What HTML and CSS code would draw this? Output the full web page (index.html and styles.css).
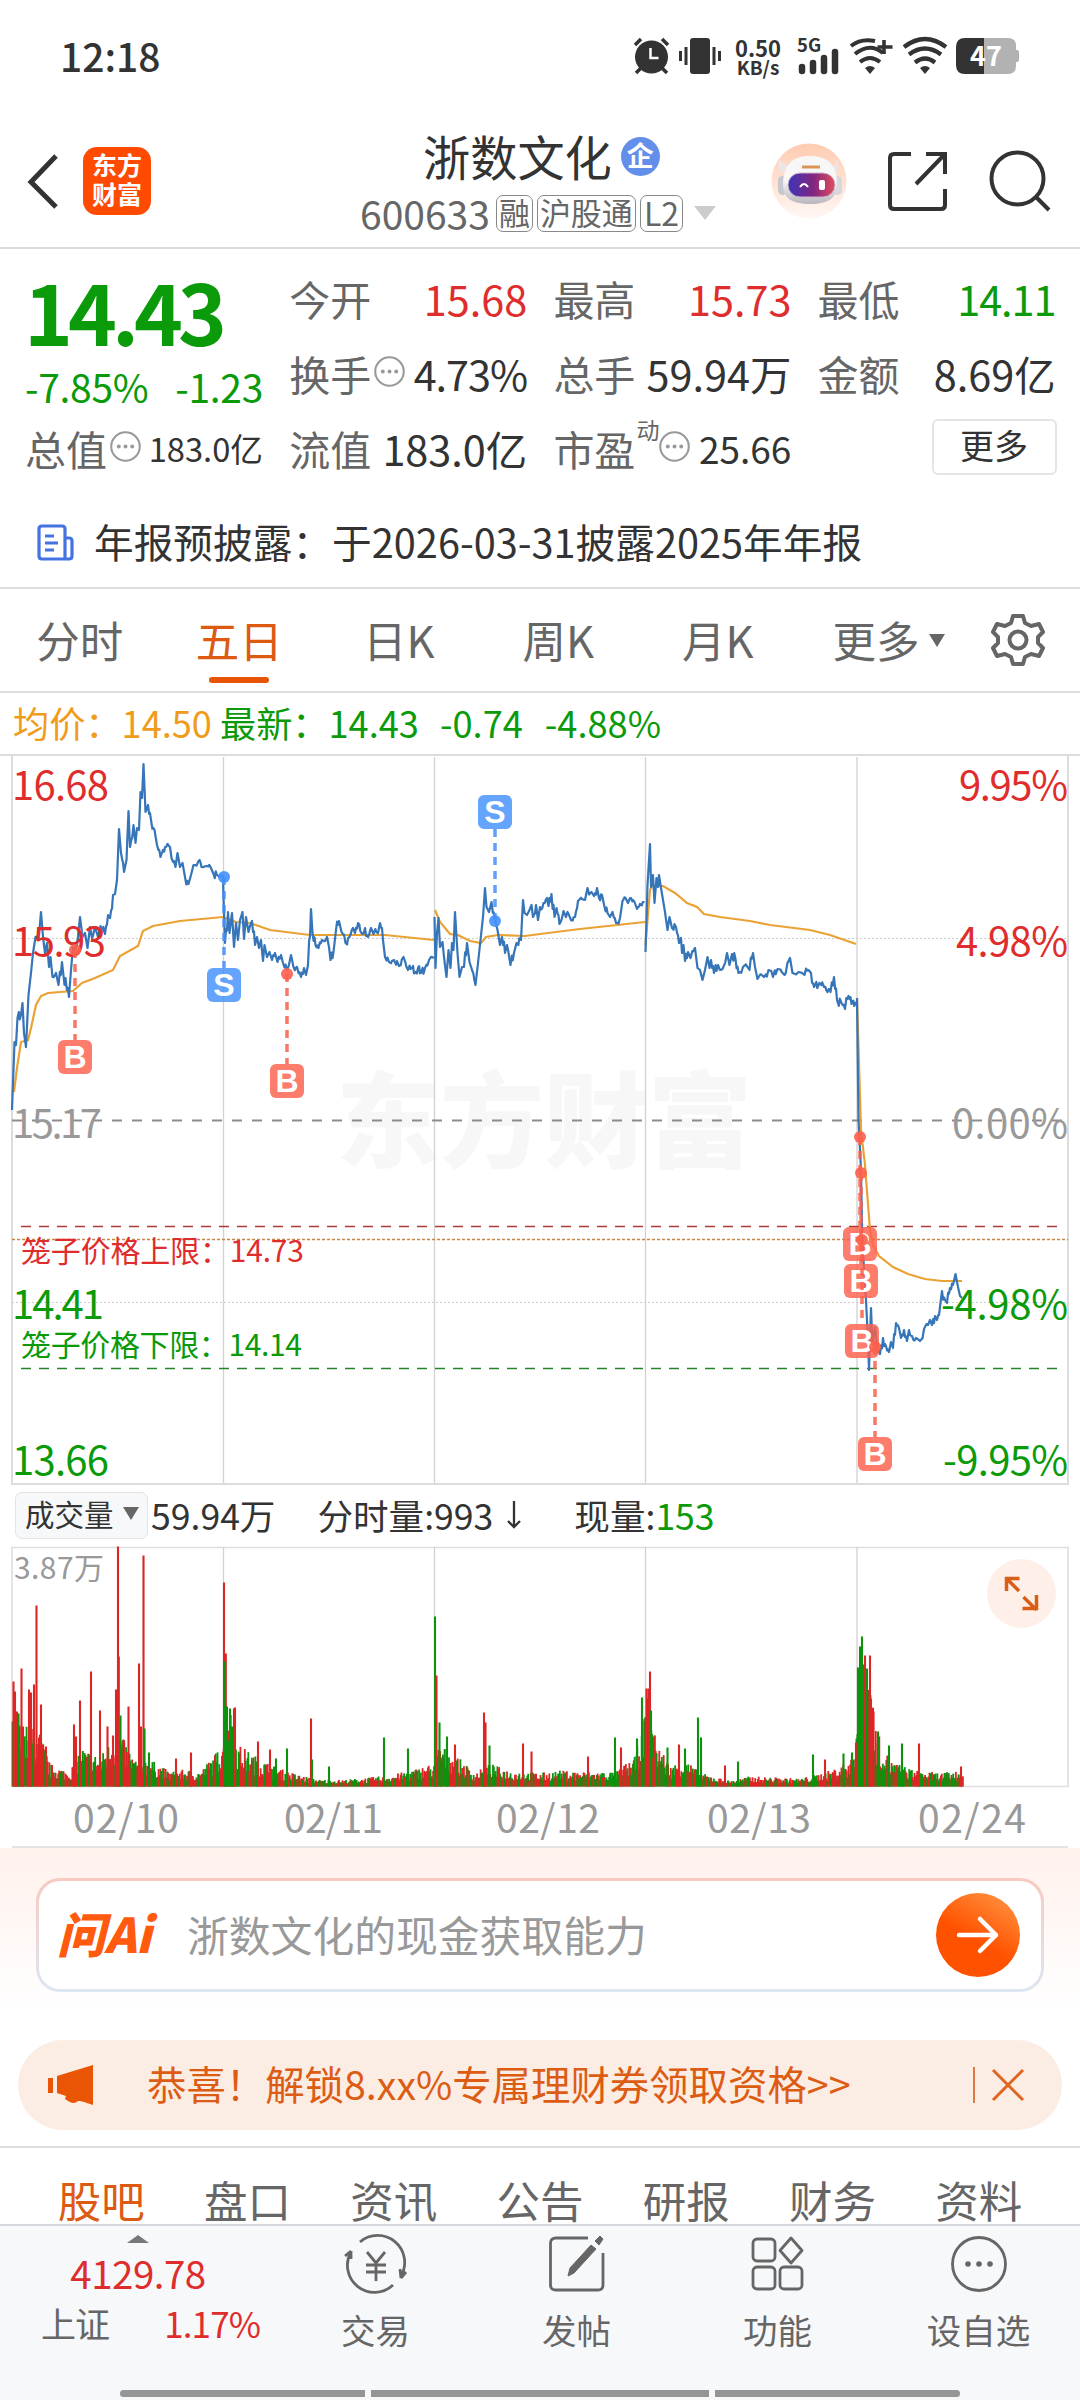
FILE: index.html
```html
<!DOCTYPE html>
<html lang="zh-CN">
<head>
  <meta charset="UTF-8" />
  <meta name="viewport" content="width=device-width, initial-scale=1.0"/>
  <title>浙数文化 600633</title>
  <link rel="stylesheet" href="styles.css">
</head>
<body>
  <!-- Status bar -->
  <div class="status">
    <span class="time">12:18</span>
    <div class="status-icons">
      <svg class="alarm" width="38" height="38" viewBox="0 0 38 38">
        <circle cx="18.500" cy="20" r="16.500" fill="#333"/>
        <path d="M2 8l6-6M35 8l-6-6M3 36l6-6M34 36l-6-6" stroke="#333" stroke-width="3.500"/>
        <path d="M17.500 11v10h8" fill="none" stroke="#fff" stroke-width="2.500"/>
      </svg>
      <svg class="vibrate" width="42" height="38" viewBox="0 0 42 38">
        <rect x="11" y="1" width="20" height="36" rx="3" fill="#333"/>
        <path d="M7 10v18M1.500 14v10M35 10v18M40.500 14v10" stroke="#333" stroke-width="3"/>
      </svg>
      <div class="speed"><b>0.50</b><b>KB/s</b></div>
      <svg class="signal" width="44" height="38" viewBox="0 0 44 38">
        <text x="0" y="15" font-size="18.500" font-weight="700" fill="#333">5G</text>
        <path d="M5 30v4M16 26v8M27 21v13M38 15v19" stroke="#333" stroke-width="6.500" stroke-linecap="round"/>
      </svg>
      <svg class="wifi-plus" width="44" height="38" viewBox="0 0 44 38">
        <path d="M2 9q10-8 24-5M6 17q15-12 28-1M11 25q10-8 20 0" fill="none" stroke="#333" stroke-width="4"/>
        <path d="M16 31q5-4 10 0l-5 6z" fill="#333"/>
        <path d="M35 3v14M28.500 10h15" stroke="#333" stroke-width="3.600"/>
      </svg>
      <svg class="wifi" width="44" height="38" viewBox="0 0 44 38">
        <path d="M1 10q21-16 42 0M6 17.500q16-12 32 0M12 25.500q10-8 20 0" fill="none" stroke="#333" stroke-width="4.200"/>
        <path d="M17 31q5-4 10 0l-5 6z" fill="#333"/>
      </svg>
      <svg width="63" height="38" viewBox="0 0 63 38">
        <path d="M28 1h24q8 0 8 8v20q0 8-8 8h-24z" fill="#b2b2b2"/>
        <rect x="58" y="13" width="5" height="12" rx="2" fill="#b2b2b2"/>
        <path d="M28 1h-19q-9 0-9 9v18q0 9 9 9h19z" fill="#333"/>
        <text x="14" y="29" font-size="27" font-weight="700" fill="#fff">47</text>
      </svg>
    </div>
  </div>

  <!-- Header -->
  <div class="header">
    <div class="header-left">
      <svg class="back" width="34" height="58" viewBox="0 0 34 58"><path d="M31 4L6 30l25 25" fill="none" stroke="#333" stroke-width="5"/></svg>
      <div class="logo">东方<br>财富</div>
    </div>
    <div class="title">
      <div class="name">浙数文化<span class="corp">企</span></div>
      <div class="code">600633<span class="tag first">融</span><span class="tag">沪股通</span><span class="tag">L2</span><i class="down grey"></i></div>
    </div>
    <div class="header-right">
      <svg width="76" height="76" viewBox="0 0 76 76">
        <defs>
          <linearGradient id="halo" x1="0" y1="0" x2="0" y2="1"><stop offset="0" stop-color="#ffcbb0"/><stop offset="1" stop-color="#fff8f5"/></linearGradient>
          <linearGradient id="visor"><stop offset="0" stop-color="#3c35b8"/><stop offset=".55" stop-color="#83267f"/><stop offset="1" stop-color="#e54c5c"/></linearGradient>
          <linearGradient id="helmet" x1="0" y1="0" x2="0" y2="1"><stop offset=".5" stop-color="#f8f7f8"/><stop offset="1" stop-color="#b9b5bd"/></linearGradient>
        </defs>
        <circle cx="38" cy="38" r="37.500" fill="url(#halo)"/>
        <path d="M10 30q-5-8-1-14 3 6 10 7zM61 23q7-1 3-8 7 8 0 17z" fill="#ece6e8"/>
        <rect x="7" y="33" width="9" height="19" rx="4.500" fill="#c8c8d1"/><rect x="62" y="33" width="9" height="19" rx="4.500" fill="#d9d6dc"/>
        <path d="M12 42c0-20 9-29 27-29s27 9 27 29c0 13-9 19-27 19s-27-6-27-19z" fill="url(#helmet)"/>
        <rect x="17" y="30" width="47" height="24" rx="12" fill="url(#visor)" stroke="#cbb4cf"/>
        <path d="M29 44q4-6 8 0" fill="none" stroke="#fff" stroke-width="2"/>
        <rect x="48" y="37" width="6" height="10" rx="2" fill="#fff"/>
        <path d="M31 24h18" stroke="#d99458" stroke-width="3"/>
      </svg>
      <svg width="60" height="60" viewBox="0 0 60 60"><path d="M23 3H6q-4 0-4 4v47q0 4 4 4h47q4 0 4-4V38M38 3h19v20M57 3L28 33" fill="none" stroke="#333" stroke-width="4"/></svg>
      <svg width="62" height="62" viewBox="0 0 62 62"><circle cx="28.500" cy="28.500" r="26" fill="none" stroke="#333" stroke-width="4"/><path d="M47 47l13 13" stroke="#333" stroke-width="4"/></svg>
    </div>
  </div>

  <!-- Quote -->
  <svg width="0" height="0" class="symbols">
    <symbol id="dots" viewBox="0 0 30 30">
      <circle cx="15" cy="15" r="13.800" fill="none" stroke="#999" stroke-width="2"/>
      <circle cx="8.500" cy="15" r="1.900" fill="#999"/><circle cx="15" cy="15" r="1.900" fill="#999"/><circle cx="21.500" cy="15" r="1.900" fill="#999"/>
    </symbol>
  </svg>
  <div class="quote">
    <div class="cell price">
      <div class="last green">14.43</div>
      <div class="change green"><span>-7.85%</span><span>-1.23</span></div>
    </div>
    <div class="cell"><label>今开</label><span class="red">15.68</span></div>
    <div class="cell"><label>最高</label><span class="red">15.73</span></div>
    <div class="cell"><label>最低</label><span class="green tight">14.11</span></div>
    <div class="cell"><label>换手<svg class="dots"><use href="#dots"/></svg></label><span class="tight">4.73%</span></div>
    <div class="cell"><label>总手</label><span>59.94万</span></div>
    <div class="cell"><label>金额</label><span>8.69亿</span></div>
    <div class="cell"><label>总值<svg class="dots"><use href="#dots"/></svg></label><span class="small">183.0亿</span></div>
    <div class="cell"><label>流值</label><span>183.0亿</span></div>
    <div class="cell"><label>市盈<sup>动</sup><svg class="dots pe"><use href="#dots"/></svg></label><span class="mid">25.66</span></div>
    <div class="cell last-cell"><button class="more-btn">更多</button></div>
  </div>

  <div class="notice">
    <svg width="37" height="38" viewBox="0 0 37 38"><path d="M28 35V5q0-3-3-3H5Q2 2 2 5v27q0 3 3 3h27q3 0 3-3V17q0-3-3-3h-4M8 12h9M8 19h13M8 26h9" fill="none" stroke="#4472e3" stroke-width="3.200"/></svg>
    <span>年报预披露：于2026-03-31披露2025年年报</span>
  </div>

  <!-- Period tabs -->
  <div class="periods">
    <span>分时</span>
    <span class="active">五日</span>
    <span>日K</span>
    <span>周K</span>
    <span>月K</span>
    <span class="period-more">更多<i class="down dark"></i></span>
    <svg width="54" height="54" viewBox="0 0 54 54">
      <path d="M22 3h10l2 7 6 3 8-2 4 8-5 5v6l5 5-4 8-8-2-6 3-2 7H22l-2-7-6-3-8 2-4-8 5-5v-6l-5-5 4-8 8 2 6-3z" fill="none" stroke="#666" stroke-width="4" stroke-linejoin="round"/>
      <circle cx="27" cy="27" r="8.500" fill="none" stroke="#666" stroke-width="4"/>
    </svg>
  </div>

  <div class="legend">
    <span class="orange">均价：14.50</span>
    <span class="green">最新：14.43</span>
    <span class="green gap">-0.74</span>
    <span class="green gap">-4.88%</span>
  </div>

  <!-- Price chart -->
  <svg class="price-chart" width="1080" height="730" viewBox="0 756 1080 730">
    <text class="watermark" x="336" y="1160" textLength="416">东方财富</text>
    <path d="M223.500 757V1483M434.500 757V1483M645.500 757V1483M857 757V1483" stroke="#d2d2d2" stroke-width="1.300"/>
    <path d="M12 756V1484H1068V756" fill="none" stroke="#dcdcdc" stroke-width="2"/>
    <path d="M12 938.500H1068M12 1302.500H1068" stroke="#ccc" stroke-dasharray="2 2"/>
    <path d="M12 1120.500H1068" stroke="#8c8c8c" stroke-width="2" stroke-dasharray="10 10"/>
    <path d="M21 1226.500H1058" stroke="#a83c3c" stroke-width="1.400" stroke-dasharray="10 8"/>
    <path d="M12 1239.500H1068" stroke="#c98546" stroke-width="1.500" stroke-dasharray="3 2"/>
    <path d="M21 1368.500H1058" stroke="#26822b" stroke-width="1.400" stroke-dasharray="10 8"/>
    <g id="avg" fill="none" stroke="#eba235" stroke-width="2.200"></g>
    <g id="price" fill="none" stroke="#3575b8" stroke-width="2.200" stroke-linejoin="round"></g>
    <g class="axis">
      <text class="up" x="12" y="800" textLength="97">16.68</text>
      <text class="up" x="12" y="956" textLength="94">15.93</text>
      <text class="flat" x="12" y="1138" textLength="90">15.17</text>
      <text class="dn" x="12" y="1319" textLength="92">14.41</text>
      <text class="dn" x="12" y="1475" textLength="97">13.66</text>
      <g text-anchor="end">
        <text class="up" x="1068" y="800" textLength="109">9.95%</text>
        <text class="up" x="1068" y="956" textLength="112">4.98%</text>
        <text class="flat" x="1068" y="1138" textLength="116">0.00%</text>
        <text class="dn" x="1068" y="1319" textLength="127">-4.98%</text>
        <text class="dn" x="1068" y="1475" textLength="125">-9.95%</text>
      </g>
    </g>
    <g class="cage">
      <text class="up" x="21" y="1262" textLength="283">笼子价格上限：14.73</text>
      <text class="dn" x="21" y="1356" textLength="281">笼子价格下限：14.14</text>
    </g>
    <g id="trades"></g>
  </svg>

  <div class="vol-legend">
    <button class="vol-btn">成交量<i class="down dark"></i></button>
    <span>59.94万</span>
    <span class="vol-minute">分时量:993<svg width="16" height="28" viewBox="0 0 16 28"><path d="M8 0v26M2 20l6 6 6-6" fill="none" stroke="#333" stroke-width="2.300"/></svg></span>
    <span>现量:<em class="green">153</em></span>
  </div>

  <!-- Volume chart -->
  <svg class="vol-chart" width="1080" height="302" viewBox="0 1546 1080 302">
    <path d="M12 1547.500H1068V1786.500H12z" fill="none" stroke="#dedede" stroke-width="1.600"/>
    <path d="M223.500 1547V1786M434.500 1547V1786M645.500 1547V1786M857 1547V1786" stroke="#d2d2d2" stroke-width="1.300"/>
    <g id="volume"></g>
    <text x="14" y="1579" font-size="30" fill="#999" textLength="90">3.87万</text>
    <circle cx="1021.500" cy="1593.500" r="34.500" fill="#fef0e8"/>
    <path d="M1006.500 1591V1578.500H1019.500M1007 1579l12 12M1023.500 1597l13 13M1022.500 1608.500H1036.500V1595" fill="none" stroke="#d95e18" stroke-width="3.500"/>
    <g class="dates">
      <text x="73" y="1833" textLength="106">02/10</text>
      <text x="284" y="1833" textLength="99">02/11</text>
      <text x="496" y="1833" textLength="104">02/12</text>
      <text x="707" y="1833" textLength="104">02/13</text>
      <text x="918" y="1833" textLength="108">02/24</text>
    </g>
    <path d="M12 1847H1068" stroke="#e6e3e1" stroke-width="2"/>
  </svg>

  <!-- Ask AI -->
  <div class="ask">
    <div class="ask-box">
      <span class="ask-logo">问Ai</span>
      <span class="ask-text">浙数文化的现金获取能力</span>
      <span class="ask-go"><svg width="44" height="40" viewBox="0 0 44 40"><path d="M3 20h37M24 4l16 16-16 16" fill="none" stroke="#fff" stroke-width="4.500" stroke-linecap="round" stroke-linejoin="round"/></svg></span>
    </div>
  </div>

  <div class="promo">
    <svg width="46" height="40" viewBox="0 0 46 40"><path d="M0 13h5v15H0zM9 11L45 0v40l-9-3-4-1-2 0q-4 4-10 0l-3-2 1-3-9-3z" fill="#e95504"/></svg>
    <span>恭喜！解锁8.xx%专属理财券领取资格&gt;&gt;</span>
    <i class="promo-line"></i>
    <svg width="34" height="34" viewBox="0 0 34 34"><path d="M2 2l30 30M32 2L2 32" stroke="#e0651f" stroke-width="3"/></svg>
  </div>

  <div class="sections">
    <span class="active">股吧</span><span>盘口</span><span>资讯</span><span>公告</span><span>研报</span><span>财务</span><span>资料</span>
  </div>

  <!-- Bottom bar -->
  <div class="bottom">
    <div class="index">
      <i class="up-arrow"></i>
      <div class="index-value">4129.78</div>
      <div class="index-row"><span>上证</span><em>1.17%</em></div>
    </div>
    <div class="item">
      <svg width="66" height="60" viewBox="0 0 66 60"><path d="M17 8a27 27 0 0 1 41 34M58 44l5-6M58 44l-1-9M50 51a27 27 0 0 1-42-33M8 17l-6 5M8 17v8M24 18l9 11 9-11M33 29v18M23 31h20M23 38h20" fill="none" stroke="#666" stroke-width="2.800"/></svg>
      <span>交易</span>
    </div>
    <div class="item">
      <svg width="58" height="60" viewBox="0 0 58 60"><path d="M40 4H8Q2.500 4 2.500 9v42q0 5 5.500 5h42q5 0 5-5V19" fill="none" stroke="#666" stroke-width="2.800"/><path d="M43 11l5 4-22 24-6 3 2-8zM47 7l5-5 3 3-4 6z" fill="#666" stroke="#666"/></svg>
      <span>发帖</span>
    </div>
    <div class="item">
      <svg width="56" height="60" viewBox="0 0 56 60"><g fill="none" stroke="#666" stroke-width="2.800"><rect x="3" y="5" width="22" height="22" rx="4"/><rect x="3" y="33" width="22" height="22" rx="4"/><rect x="30" y="33" width="22" height="22" rx="4"/><path d="M41 4l11 12.500L41 29 30 16.500z" stroke-linejoin="round"/></g></svg>
      <span>功能</span>
    </div>
    <div class="item">
      <svg width="60" height="60" viewBox="0 0 60 60"><circle cx="30" cy="30" r="26.500" fill="none" stroke="#666" stroke-width="2.800"/><circle cx="19" cy="30" r="2.800" fill="#666"/><circle cx="30" cy="30" r="2.800" fill="#666"/><circle cx="41" cy="30" r="2.800" fill="#666"/></svg>
      <span>设自选</span>
    </div>
    <div class="gesture"><i></i><i class="wide"></i><i></i></div>
  </div>

  <script src="script.js"></script>
</body>
</html>
```
FILE: styles.css
```css
* {
  box-sizing: border-box;
}
body {
  margin: 0;
  width: 1080px;
  height: 2400px;
  overflow: hidden;
  background-color: #fff;
  color: #333;
  font-family: "Noto Sans CJK SC", sans-serif;
  line-height: 1;
  white-space: nowrap;
}
svg {
  display: block;
  flex-shrink: 0;
  overflow: visible;
}
i, em {
  font-style: normal;
}
button {
  font-family: inherit;
  color: #333;
  line-height: 1;
}
.red, .up {
  color: #df2d2d;
  fill: #df2d2d;
}
.green, .dn {
  color: #0a9a0a;
  fill: #0a9a0a;
}
.orange {
  color: #ef9c1c;
}
.flat {
  fill: #999;
}
.symbols {
  position: absolute;
}

/* status bar */
.status {
  height: 112px;
  padding: 0 61px 0 60px;
  display: flex;
  align-items: center;
  justify-content: space-between;
}
.time {
  font-size: 39px;
  font-weight: 500;
  padding-bottom: 2px;
}
.status-icons {
  display: flex;
  align-items: center;
  height: 38px;
}
.alarm {
  margin-right: 8px;
}
.vibrate {
  margin-right: 13px;
}
.speed {
  width: 48px;
  margin-right: 15px;
  display: flex;
  flex-direction: column;
  align-items: center;
  font-size: 19px;
}
.speed b:first-child {
  font-size: 22px;
  line-height: 20px;
}
.signal {
  margin-right: 8px;
}
.wifi-plus {
  margin-right: 10px;
}
.wifi {
  margin-right: 9px;
}

/* header */
.header {
  height: 137px;
  border-bottom: 2px solid #dcdcdc;
  display: grid;
  grid-template-columns: 330px 1fr 330px;
}
.header-left {
  display: flex;
  align-items: center;
  padding: 3px 0 0 25px;
  gap: 24px;
}
.logo {
  width: 68px;
  height: 68px;
  border-radius: 14px;
  background-color: #ff4a02;
  color: #fff;
  font-size: 25px;
  font-weight: 700;
  line-height: 29px;
  text-align: center;
  padding-top: 3px;
}
.title {
  padding-top: 20px;
}
.name {
  display: flex;
  align-items: center;
  font-size: 47.200px;
  margin-left: 93px;
}
.corp {
  width: 39px;
  height: 39px;
  border-radius: 50%;
  background-color: #638feb;
  color: #fff;
  font-size: 27px;
  font-weight: 700;
  line-height: 36px;
  text-align: center;
  margin: 2px 0 0 9px;
}
.code {
  display: flex;
  align-items: center;
  gap: 4px;
  margin: 15px 0 0 30px;
  font-size: 39px;
  color: #666;
  line-height: 36px;
}
.tag {
  height: 37px;
  padding: 0 2px;
  border: 1.500px solid #888;
  border-radius: 7px;
  font-size: 31px;
  line-height: 32px;
  margin-top: 1px;
}
.first {
  margin-left: 2px;
}
.tag:nth-of-type(3) {
  padding: 0 3px;
  font-size: 32px;
}
.down {
  display: inline-block;
  border: solid transparent;
  border-width: 0 8px;
}
.grey {
  margin-left: 7px;
  border-width: 14px 11px 0;
  border-top-color: #ccc;
}
.dark {
  border-width: 13px 8px 0;
  border-top-color: #666;
}
.header-right {
  display: flex;
  align-items: center;
  padding: 2px 0 0 21px;
  gap: 41px;
}

/* quote */
.quote {
  height: 241px;
  padding: 12px 23px 0 25px;
  display: grid;
  grid-template-columns: 238px 238px 238px 238px;
  grid-template-rows: 75px 75px 75px;
  column-gap: 26.200px;
  font-size: 41.400px;
}
.cell {
  display: flex;
  align-items: center;
  justify-content: space-between;
}
.cell label {
  display: flex;
  align-items: center;
  font-size: 41px;
  color: #666;
}
.price {
  grid-row: span 2;
  display: block;
}
.last {
  font-size: 83px;
  font-weight: 700;
  letter-spacing: -5px;
  padding-top: 8px;
  margin-left: -1px;
}
.change {
  display: flex;
  justify-content: space-between;
  font-size: 39px;
  letter-spacing: -0.300px;
  margin-top: 15px;
}
.tight {
  letter-spacing: -1px;
}
.dots {
  width: 31px;
  height: 31px;
  margin: -5px 0 0 3px;
}
.cell sup {
  font-size: 23px;
  line-height: 23px;
  margin: -38px 0 0 1px;
}
.pe {
  margin-left: 0;
}
.small {
  font-size: 32.700px;
}
.mid {
  font-size: 37px;
}
.last-cell {
  justify-content: flex-end;
}
.more-btn {
  width: 125px;
  height: 56px;
  margin: 0 -1px 3px 0;
  border: 2px solid #e5e5e5;
  border-radius: 6px;
  background-color: #fff;
  font-size: 34px;
  padding: 0 0 4px;
}
.notice {
  height: 99px;
  border-bottom: 2px solid #dcdcdc;
  display: flex;
  align-items: center;
  padding: 9px 0 0 37px;
  gap: 20px;
  font-size: 39.700px;
}
.notice span {
  padding-bottom: 5px;
}

/* period tabs */
.periods {
  height: 104px;
  border-bottom: 2px solid #dcdcdc;
  display: grid;
  grid-template-columns: repeat(5, 159.500px) 193px 54px;
  align-items: center;
  text-align: center;
  font-size: 43.500px;
  color: #666;
}
.periods .active {
  position: relative;
  color: #dc5a12;
}
.periods .active::after {
  content: "";
  position: absolute;
  left: 49px;
  bottom: -21px;
  width: 60px;
  height: 6px;
  border-radius: 3px;
  background-color: #e95504;
}
.period-more {
  display: flex;
  align-items: center;
  padding-left: 35px;
  gap: 9px;
}
.legend {
  height: 63px;
  border-bottom: 2px solid #dcdcdc;
  padding: 0 0 2px 13px;
  display: flex;
  align-items: center;
  font-size: 36.200px;
}
.legend .orange {
  margin-right: 8px;
}
.gap {
  margin-left: 21px;
}
.legend .gap:last-child {
  margin-left: 22px;
}

/* charts */
.watermark {
  font-size: 104px;
  font-weight: 900;
  fill: #f7f7f7;
}
.axis {
  font-size: 40px;
}
.cage {
  font-size: 30px;
}
.badge {
  font-family: "Liberation Sans", sans-serif;
  font-size: 32px;
  font-weight: 700;
  fill: #fff;
  text-anchor: middle;
}
.dates {
  font-size: 39px;
  fill: #999;
}
.vol-legend {
  height: 60px;
  display: flex;
  align-items: center;
  padding: 0 0 2px 15px;
  font-size: 35.600px;
}
.vol-btn {
  width: 133px;
  height: 47px;
  margin-right: 3px;
  border: 1.500px solid #e2e4e8;
  border-radius: 7px;
  background-color: #f7f8fa;
  font-size: 29.500px;
  padding: 0 0 3px 9px;
  display: flex;
  align-items: center;
  gap: 9px;
}
.vol-minute {
  display: flex;
  align-items: center;
  gap: 13px;
  margin: 0 52px 0 42px;
}

/* ask AI */
.ask {
  height: 192px;
  padding: 30px 36px 0;
  background: linear-gradient(#fff1ec, #fff 85%);
}
.ask-box {
  height: 114px;
  border: 3px solid transparent;
  border-radius: 24px;
  background: linear-gradient(#fff, #fff) padding-box, linear-gradient(#f8c9c0, #dde6f3) border-box;
  display: flex;
  align-items: center;
  padding: 0 21px 0 18px;
}
.ask-logo {
  width: 130px;
  font-size: 48px;
  font-weight: 900;
  font-style: italic;
  letter-spacing: -0.500px;
  color: #ff5a0d;
  padding-bottom: 7px;
}
.ask-text {
  flex: 1;
  font-size: 41.800px;
  color: #999;
}
.ask-go {
  width: 84px;
  height: 84px;
  border-radius: 50%;
  background: linear-gradient(30deg, #ff5200 45%, #ff9a48);
  display: flex;
  align-items: center;
  justify-content: center;
}
.promo {
  height: 90px;
  margin: 0 18px;
  padding: 0 37px 0 30px;
  border-radius: 45px;
  background-color: #fcede4;
  display: flex;
  align-items: center;
  font-size: 39.400px;
  color: #dc5c14;
}
.promo span {
  flex: 1;
  margin-left: 53px;
  padding-bottom: 4px;
}
.promo-line {
  width: 2px;
  height: 36px;
  margin-right: 16px;
  background-color: #dc7a45;
}
.sections {
  height: 78px;
  margin-top: 16px;
  border-top: 2px solid #dcdee2;
  padding: 30px 28px 0;
  display: grid;
  grid-template-columns: repeat(7, 1fr);
  text-align: center;
  font-size: 43.500px;
  color: #666;
}
.sections .active {
  color: #dc5a12;
}

/* bottom bar */
.bottom {
  height: 176px;
  border-top: 2px solid #d5d8df;
  background-color: #f7f8fa;
  display: grid;
  grid-template-columns: 275px repeat(4, 201px);
  grid-template-rows: 164px 8px;
  color: #666;
}
.index {
  padding: 9px 0 0 27px;
  color: #df2d2d;
}
.up-arrow {
  display: block;
  width: 22px;
  margin-left: 100px;
  border: solid transparent;
  border-width: 0 11px 8px;
  border-bottom-color: #77787c;
}
.index-value {
  font-size: 38.500px;
  letter-spacing: -0.500px;
  width: 222px;
  text-align: center;
  margin-top: 10px;
}
.index-row {
  display: flex;
  justify-content: space-between;
  width: 233px;
  padding-left: 14px;
  margin: 13px 0 0;
  font-size: 35px;
  letter-spacing: -0.900px;
}
.index-row span {
  color: #666;
}
.item {
  display: flex;
  flex-direction: column;
  align-items: center;
  padding-top: 8px;
  gap: 18px;
  font-size: 34.500px;
}
.gesture {
  grid-column: span 5;
  display: flex;
  justify-content: center;
  gap: 6px;
}
.gesture i {
  width: 245px;
  height: 7px;
  background-color: #959595;
}
.gesture .wide {
  width: 338px;
}
.gesture i:first-child {
  border-radius: 4px 0 0 4px;
}
.gesture i:last-child {
  border-radius: 0 4px 4px 0;
}
```
FILE: script.js
```js
const prices = [
  "12,1110 14.5,1042 16,1045 17.5,1018 21,1015 22.5,1003 24,1033 26,1047 28.5,995 31,973 33,953 35.5,937 38.5,940 41,912 43,937 45,953 47,943 49,967 50.5,957 52.5,977 56,973 58.5,985 62,962 64.5,985 65.5,978 69,997 71,970 73,947 75,950 78,937 80,917 82.5,937 85,933 87.5,948 90,927 92,938 95,927 98,937 100.5,926 105,934 108,915 110,918 113,895 115,894 117,880 119,829 121,853 124,872 126.5,860 128.5,811 130,847 133.5,825 135.5,843 137,828 139,830 140.5,792 142,798 143.5,764 145.5,812 148,805 151,820 154.5,830 157,845 160.5,857 163,850 166,847 170,847 171.5,858 175.5,867 177.5,853 180,867 182.5,863 185,877 188.5,884 191,875 193.5,865 198.5,861 201.5,867 206.5,866 211,868 213.5,874 217,875 219.5,877 223,876 223.5,897 225,943 228,912 229.5,933 232,913 234,947 236,923 238,940 240,920 242.5,912 244,939 246,917 248.5,932 252,921 255,945 257,937 259,948 261,940 263,961 264.5,945 267,957 269.5,952 272,960 275,953 277.5,962 281,955 283,963 287,970 291,955 293.5,967 297,967 301,977 304,968 306,975 308,965 311,909 312.5,933 315.5,945 318.5,948 322,940 327,937 329,947 330.5,960 333.5,952 336,930 339,921 341.5,932 345.5,943 349.5,937 353,928 355,933 358,923 361.5,933 365,928 368,937 371,928 373.5,934 378,933 380,923 383,940 385,957 389,962 394,960 399,966 403.5,957 408,970 412,968 415,973 418,968 421,973 425,968 429,960 434,958",
  "434.5,917 435.5,968 437,933 438.5,918 440,947 442.5,942 444,957 446.5,977 448.5,950 450.5,968 452,943 453.5,950 455,912 457.5,953 459.5,977 462,967 464,967 467,943 469.5,962 472,970 475.5,985 478,963 480.5,940 483,917 485,888 486.5,907 489,912 491.5,902 495,920 497.5,930 500,945 502,937 505,953 507,945 510.5,965 514,953 516.5,943 521,940 523,900 524.5,913 527,915 529.5,910 531.5,905 533,917 536,905 538,920 540,907 543.5,903 547,898 548.5,906 551.5,894 554.5,917 556.5,908 559.5,924 563.5,911 566,917 567.5,912 571,920 575,917 578,901 585,900 587.5,888 591.5,892 594,896 597,888 599,898 602,895 604.5,907 607.5,913 610,917 612.5,912 616,923 620,918 622.5,901 625.5,898 628,903 631,898 634.5,902 637,909 640,904 644.5,902",
  "645.5,952 647.5,885 650,844 651,887 653,875 654.5,903 656.5,878 658,887 659,875 661,888 663,900 665,912 667.5,930 669.5,917 672,928 676,927 679,943 681,938 682,953 683.5,945 685,961 688,952 690.5,958 695,948 697.5,968 700,970 702.5,980 705,970 707.5,957 709.5,968 711,960 714,973 718,965 722.5,969 727,953 729.5,965 732,954 735.5,959 738.5,973 743,967 749.5,970 753,953 755,967 757.5,979 764,977 768.5,970 773,977 777.5,969 784.5,975 787.5,963 790,958 792.5,973 798.5,972 804.5,975 808.5,970 811,973 814,987 819.5,983 824,987 827.5,992 830.5,992 834,977 837,1000 841.5,1003 845,1009 848.5,996 851.5,1004 856,1002",
  "857,998 858.5,1120 861,1170 862,1226 864,1270 866,1300 868,1340 869,1370 871,1308 872.5,1345 875,1327 877,1345 880,1354 883,1338 886,1346 889,1352 891,1342 893,1348 896,1323 899,1328 901,1338 904,1330 907,1341 909,1330 912,1336 916,1338 920,1341 924,1329 928,1325 930,1320 932,1325 935,1316 937,1320 940,1307 942,1291 945,1300 947,1303 950,1288 953,1285 955.5,1274 958,1287 960,1296 962,1298"
];

const averages = [
  "14,1092 17,1068 21,1042 28,1040 31,1028 36,1005 41,996 48,993 73,991 82,983 95,978 113,970 120,956 138,946 143,931 153,926 180,921 223,917 236,922 250,923 270,930 310,935 345,935 385,935 434,940",
  "435,910 440,922 450,934 458,935 470,941 481,943 486,937 498,935 525,936 540,934 580,929 645,922",
  "645.5,945 650,890 652,886 663,886 675,893 687,903 697,907 704,914 720,917 750,921 770,925 810,930 830,935 856,944",
  "857,998 861,1130 865,1165 870,1230 873,1245 879,1256 893,1267 908,1274 925,1279 942,1281 962,1281"
];

// x, height, color (r = up minute, g = down minute)
const peaks = "13.5,105,r 15,95,r 17,75,r 18.5,73,g 21.5,118,r 23,60,r 29,97,r 31,94,r 34,102,r 36.5,181,r 41,82,r 46,40,r 74,62,r 76,50,r 80,86,r 91,115,r 100,76,r 107.5,60,r 113,51,r 116,97,r 118,240,r 118.8,130,r 120.5,71,g 128.5,80,r 139,123,r 141,60,r 143.5,231,r 144.5,58,g 149,34,g 176,28,r 191,34,r 224,204,r 225.8,133,r 225,125,g 227,80,g 230,78,g 232,60,g 234,78,g 235,79,r 258,45,r 270,37,r 276,28,g 287,38,g 311,68,r 312,27,g 329,20,g 384,49,g 408,38,g 435,170,g 436.5,111,r 439.5,64,g 447,50,g 455,42,r 484,74,r 485.5,64,r 489.5,41,g 523,43,r 531.5,35,r 588,30,r 615,49,g 621,39,r 637,48,g 642,89,g 646.5,98,r 648.5,98,r 650,115,r 651,76,g 654,50,r 667.5,39,g 679,42,r 685,38,g 698,69,g 701,49,g 738,25,g 725,21,r 813,32,g 825,27,r 843.5,33,g 852,34,g 856,44,r 858,119,g 860,140,g 862,150,g 863,122,g 865,131,r 867,118,g 870,131,r 871,88,r 873.5,75,r 878,55,g 889,41,g 902,43,g 919,43,r 961,20,r";
const envelope = "12,60 40,48 50,20 70,13 80,35 100,26 118,50 135,24 150,24 170,13 185,15 200,13 220,34 228,80 237,38 260,24 285,14 300,10 320,6 345,6 370,8 390,10 410,14 432,20 440,38 460,24 475,12 490,20 510,14 540,12 560,14 590,13 615,13 635,26 648,80 655,45 670,18 685,24 700,12 730,5 750,9 800,7 830,14 852,24 858,70 861,120 868,125 876,50 890,23 915,14 940,12 964,14"
  .split(" ").map(p => p.split(",").map(Number));

// x, dot y, badge y, side
const trades = [
  [75, 950, 1057, "B"], [224, 877, 985, "S"], [287, 974, 1081, "B"], [495, 921, 812, "S"],
  [860, 1137, 1244, "B"], [861, 1173, 1281, "B"], [862, 1240, 1341, "B"], [875, 1347, 1454, "B"]
];

let seed = 7;
function random() {
  seed = (seed * 16807) % 2147483647;
  return seed / 2147483647;
}

function line(points) {
  return `<polyline points="${points}"/>`;
}

// fill the longer steps with small ticks
function ticks(points) {
  const list = points.split(" ").map(p => p.split(",").map(Number));
  const out = [];
  list.forEach((p, i) => {
    const prev = list[i - 1];
    if (prev && p[0] - prev[0] > 2.5) {
      out.push([(p[0] + prev[0]) / 2 - 0.4, (p[1] + prev[1]) / 2 + (random() - 0.5) * 9]);
      out.push([(p[0] + prev[0]) / 2 + 0.5, (p[1] + prev[1]) / 2 + (random() - 0.5) * 7]);
    }
    out.push(p);
  });
  return out.join(" ");
}

function base(x) {
  const i = envelope.findIndex(p => p[0] >= x);
  if (i < 1) return envelope[0][1];
  const [a, b] = [envelope[i - 1], envelope[i]];
  return a[1] + (b[1] - a[1]) * (x - a[0]) / (b[0] - a[0]);
}

function bar(x, h, c, w) {
  return `<rect x="${x - w / 2}" y="${1786.5 - h}" width="${w}" height="${h}" fill="${c === "r" ? "#dc2525" : "#0d920d"}"/>`;
}

document.getElementById("avg").innerHTML = averages.map(line).join("");
document.getElementById("price").innerHTML = prices.map(p => line(ticks(p))).join("");

let bars = "";
for (let x = 12.5; x < 963; x += 0.88) {
  const h = Math.max(3, base(x) * (0.4 + random() * 0.75));
  bars += bar(x, h, random() < 0.55 ? "r" : "g", 1.8);
}
peaks.split(" ").forEach(p => {
  const [x, h, c] = p.split(",");
  bars += bar(+x, +h, c, 2.1);
});
document.getElementById("volume").innerHTML = bars;

document.getElementById("trades").innerHTML = trades.map(([x, y, by, side]) => {
  const color = side === "B" ? "#fc5f4c" : "#4290fb";
  const end = by > y ? by - 17 : by + 17;
  return `<path d="M${x} ${y}V${end}" stroke="${color}" stroke-width="3.5" stroke-dasharray="8 6" opacity=".85"/>
    <circle cx="${x}" cy="${y}" r="6" fill="${color}" opacity=".9"/>
    <rect x="${x - 17}" y="${by - 17}" width="34" height="34" rx="6" fill="${color}" opacity=".82"/>
    <text class="badge" x="${x}" y="${by + 11}">${side}</text>`;
}).join("");
```
